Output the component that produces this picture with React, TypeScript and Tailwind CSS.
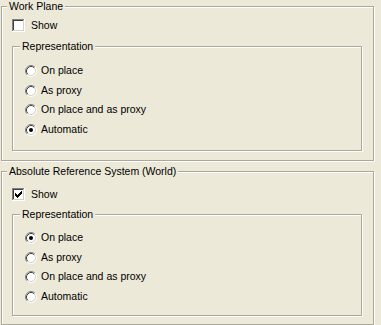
import React from "react";

function CheckBox({ checked }: { checked: boolean }) {
  return (
    <svg width="13" height="13" viewBox="0 0 13 13" className="block shrink-0" shapeRendering="crispEdges">
      <rect x="0" y="0" width="13" height="13" fill="#ffffff" />
      <rect x="0" y="0" width="12" height="1" fill="#808080" />
      <rect x="0" y="0" width="1" height="12" fill="#808080" />
      <rect x="1" y="1" width="10" height="1" fill="#404040" />
      <rect x="1" y="1" width="1" height="10" fill="#404040" />
      <rect x="1" y="11" width="11" height="1" fill="#D4D0C8" />
      <rect x="11" y="1" width="1" height="11" fill="#D4D0C8" />
      {checked && (
        <path
          d="M3 5h1v1h1v1h1V6h1V5h1V4h1V3h1v3H9v1H8v1H7v1H6v1H5V9H4V8H3z"
          fill="#000000"
        />
      )}
    </svg>
  );
}

function Radio({ checked }: { checked: boolean }) {
  return (
    <svg width="12" height="12" viewBox="0 0 12 12" className="block shrink-0">
      <circle cx="6" cy="6" r="5" fill="#ffffff" />
      <path d="M2.11 9.89 A5.5 5.5 0 0 1 9.89 2.11" fill="none" stroke="#808080" strokeWidth="1" />
      <path d="M9.89 2.11 A5.5 5.5 0 0 1 2.11 9.89" fill="none" stroke="#ffffff" strokeWidth="1" />
      <path d="M2.82 9.18 A4.5 4.5 0 0 1 9.18 2.82" fill="none" stroke="#404040" strokeWidth="1" />
      <path d="M9.18 2.82 A4.5 4.5 0 0 1 2.82 9.18" fill="none" stroke="#D4D0C8" strokeWidth="1" />
      {checked && <circle cx="6" cy="6" r="2" fill="#000000" />}
    </svg>
  );
}

function Options({ selected, gaps }: { selected: number; gaps: string[] }) {
  const labels = ["On place", "As proxy", "On place and as proxy", "Automatic"];
  const tops = ["mt-0", "mt-[7px]", "mt-[6px]", "mt-[7px]"];
  return (
    <div className={`flex flex-col pl-[12px] ${gaps[0]}`}>
      {labels.map((l, i) => (
        <div key={l} className={`flex items-center h-[13px] ${tops[i]}`}>
          <Radio checked={i === selected} />
          <span className="ml-[4px] leading-[13px]">{l}</span>
        </div>
      ))}
    </div>
  );
}

export default function App() {
  return (
    <div
      className="w-[381px] h-[325px] bg-[#ECE9D8] pt-[6px] pl-[1px] text-[10.5px] text-black overflow-hidden"
      style={{ fontFamily: '"Liberation Sans", Arial, sans-serif' }}
    >
      {/* Work Plane */}
      <div className="relative w-[373px] h-[155px] border border-[#ACA899] shadow-[inset_1px_1px_0_#ffffff,1px_1px_0_#ffffff] pl-[10px]">
        <div className="absolute left-[5px] top-[-7px] h-[13px] px-[2px] bg-[#ECE9D8] leading-[13px]">
          Work Plane
        </div>
        <div className="flex items-center mt-[12px]">
          <CheckBox checked={false} />
          <span className="ml-[6px] leading-[13px]">Show</span>
        </div>
        <div className="relative mt-[14px] w-[350px] h-[105px] border border-[#ACA899] shadow-[inset_1px_1px_0_#ffffff,1px_1px_0_#ffffff]">
          <div className="absolute left-[7px] top-[-7px] h-[13px] px-[2px] bg-[#ECE9D8] leading-[13px]">
            Representation
          </div>
          <Options selected={3} gaps={["mt-[17px]"]} />
        </div>
      </div>

      {/* Absolute Reference System */}
      <div className="relative mt-[10px] w-[373px] h-[154px] border border-[#ACA899] shadow-[inset_1px_1px_0_#ffffff,1px_1px_0_#ffffff] pl-[10px]">
        <div className="absolute left-[5px] top-[-7px] h-[13px] px-[2px] bg-[#ECE9D8] leading-[13px]">
          Absolute Reference System (World)
        </div>
        <div className="flex items-center mt-[16px]">
          <CheckBox checked={true} />
          <span className="ml-[6px] leading-[13px]">Show</span>
        </div>
        <div className="relative mt-[13px] w-[350px] h-[102px] border border-[#ACA899] shadow-[inset_1px_1px_0_#ffffff,1px_1px_0_#ffffff]">
          <div className="absolute left-[7px] top-[-7px] h-[13px] px-[2px] bg-[#ECE9D8] leading-[13px]">
            Representation
          </div>
          <Options selected={0} gaps={["mt-[16px]"]} />
        </div>
      </div>
    </div>
  );
}
